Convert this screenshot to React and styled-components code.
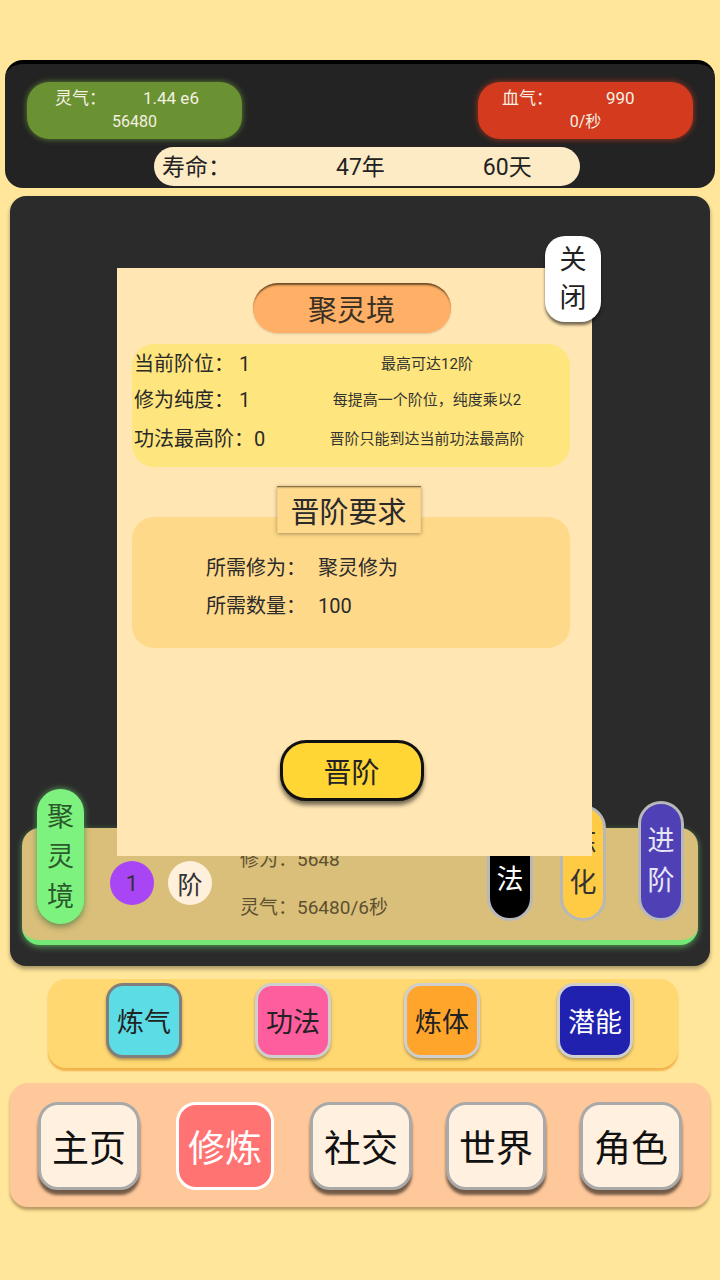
import React from "react";
import styled, { createGlobalStyle } from "styled-components";

const Global = createGlobalStyle`
  html, body { margin: 0; padding: 0; background: #FFE69B; }
  body { font-family: Roboto, "Noto Sans CJK SC", "Noto Sans", sans-serif; }
  * { box-sizing: border-box; }
`;

const Page = styled.div`
  width: 720px;
  min-height: 1280px;
  background: #FFE69B;
  padding-top: 60px;
  display: flex;
  flex-direction: column;
`;

const TopPanel = styled.div`
  margin: 0 5px;
  height: 128px;
  background: #232323;
  border-top: 4px solid #000;
  border-radius: 18px;
  padding: 18px 22px 0;
  display: flex;
  flex-direction: column;
`;

const StatRow = styled.div`
  display: flex;
  justify-content: space-between;
`;

const StatPill = styled.div`
  width: 215px;
  height: 57px;
  border-radius: 22px;
  background: ${(p) => p.$bg};
  box-shadow: 0 0 6px ${(p) => p.$glow};
  color: #F4F0E2;
  display: flex;
  flex-direction: column;
  padding-top: 3px;
`;

const StatTop = styled.div`
  display: flex;
  align-items: center;
  height: 26px;
  font-size: 17px;
`;

const StatLabel = styled.span`
  margin-left: ${(p) => p.$ml}px;
  width: ${(p) => p.$w}px;
  flex-shrink: 0;
  margin-top: -4px;
`;

const StatBottom = styled.div`
  text-align: center;
  font-size: 16px;
  line-height: 22px;
`;

const LifeBar = styled.div`
  margin-top: 8px;
  margin-left: 127px;
  width: 426px;
  height: 39px;
  border-radius: 20px;
  background: #FDEBC6;
  display: flex;
  align-items: center;
  padding: 0 0 4px 8px;
  font-size: 23px;
  color: #222;
`;

const LifeItem = styled.span`
  margin-left: ${(p) => p.$ml}px;
`;

const MainPanel = styled.div`
  position: relative;
  margin: 8px 10px 0;
  height: 770px;
  background: #2B2B2B;
  border-radius: 16px;
  box-shadow: 0 3px 4px rgba(0,0,0,0.35);
  display: flex;
  flex-direction: column;
  justify-content: flex-end;
  padding: 0 12px 21px;
`;

const RealmCard = styled.div`
  height: 117px;
  background: #D9BF7A;
  border-radius: 18px;
  border-bottom: 5px solid #74E874;
  box-shadow: 0 2px 6px rgba(116,232,116,0.55);
  display: flex;
  align-items: flex-end;
  padding: 0 14px 16px 15px;
`;

const VPill = styled.div`
  width: ${(p) => p.$w || 46}px;
  height: ${(p) => p.$h}px;
  border-radius: 24px;
  background: ${(p) => p.$bg};
  color: ${(p) => p.$fg};
  border: ${(p) => (p.$border ? "3px solid #B8B8B8" : "none")};
  box-shadow: ${(p) => p.$shadow || "none"};
  display: flex;
  flex-direction: column;
  align-items: center;
  justify-content: center;
  font-size: 27px;
  line-height: 40px;
  flex-shrink: 0;
  margin-left: ${(p) => p.$ml || 0}px;
  margin-bottom: ${(p) => p.$mb || 0}px;
`;

const Circle = styled.div`
  width: 44px;
  height: 44px;
  border-radius: 50%;
  background: ${(p) => p.$bg};
  color: #333;
  font-size: ${(p) => p.$fs}px;
  display: flex;
  align-items: center;
  justify-content: center;
  margin-left: ${(p) => p.$ml}px;
  margin-bottom: 19px;
  flex-shrink: 0;
`;

const RealmInfo = styled.div`
  margin-left: 28px;
  margin-bottom: -8px;
  color: #5E5030;
  font-size: 19px;
  line-height: 48px;
  flex: 1;
`;

const Modal = styled.div`
  position: absolute;
  left: 107px;
  top: 72px;
  width: 475px;
  height: 588px;
  background: #FFE6B2;
  display: flex;
  flex-direction: column;
  align-items: center;
  padding-top: 15px;
`;

const CloseBtn = styled.div`
  position: absolute;
  left: 428px;
  top: -32px;
  width: 56px;
  height: 86px;
  border-radius: 20px;
  background: #fff;
  box-shadow: 0 3px 3px rgba(0,0,0,0.55);
  display: flex;
  flex-direction: column;
  align-items: center;
  justify-content: center;
  font-size: 27px;
  line-height: 38px;
  color: #222;
`;

const TitlePill = styled.div`
  width: 198px;
  height: 50px;
  margin-left: -6px;
  border-radius: 25px;
  background: #FFB066;
  box-shadow: inset 0 3px 2px -1px rgba(60,40,20,0.75), 0 1px 2px rgba(0,0,0,0.15);
  display: flex;
  align-items: center;
  justify-content: center;
  font-size: 29px;
  color: #3A3024;
`;

const InfoBox = styled.div`
  margin-top: 11px;
  margin-left: -7px;
  width: 438px;
  height: 123px;
  border-radius: 22px;
  background: #FFE57D;
  display: grid;
  grid-template-columns: 150px 1fr;
  grid-template-rows: 36px 37px 40px;
  align-items: center;
  padding: 0 0 0 2px;
  color: #2A2A2A;
`;

const InfoLeft = styled.div`
  font-size: 20px;
  white-space: nowrap;
`;

const InfoRight = styled.div`
  font-size: 15px;
  text-align: center;
  white-space: nowrap;
  color: #333;
`;

const ReqLabel = styled.div`
  position: relative;
  z-index: 1;
  margin-top: 19px;
  margin-left: -12px;
  width: 144px;
  height: 47px;
  background: #FFDA8C;
  box-shadow: inset 0 2px 2px -1px rgba(60,40,20,0.8), 0 1px 4px rgba(0,0,0,0.35);
  display: flex;
  align-items: center;
  justify-content: center;
  font-size: 29px;
  color: #2A2A2A;
`;

const ReqBox = styled.div`
  margin-top: -16px;
  margin-left: -7px;
  width: 438px;
  height: 131px;
  border-radius: 22px;
  background: #FFD98A;
  display: grid;
  grid-template-columns: 112px 1fr;
  align-content: start;
  padding: 32px 0 0 74px;
  font-size: 20px;
  line-height: 38px;
  color: #2A2A2A;
`;

const AdvanceBtn = styled.button`
  margin-top: 92px;
  margin-left: -6px;
  width: 144px;
  height: 61px;
  border-radius: 26px;
  background: #FFD634;
  border: 3px solid #111;
  box-shadow: 0 4px 4px rgba(0,0,0,0.55);
  font-family: inherit;
  font-size: 28px;
  color: #222;
  display: flex;
  align-items: center;
  justify-content: center;
  padding: 0;
`;

const TabBar = styled.div`
  margin: 13px 42px 0 48px;
  height: 89px;
  background: #FFD872;
  border-radius: 18px;
  box-shadow: 0 3px 2px #F3B24A;
  display: flex;
  align-items: flex-start;
  padding: 4px 0 0 58px;
`;

const TabBtn = styled.div`
  width: 76px;
  height: 75px;
  border-radius: 17px;
  background: ${(p) => p.$bg};
  color: ${(p) => p.$fg};
  border: 3px solid ${(p) => p.$bd};
  box-shadow: 0 2px 3px rgba(0,0,0,0.3);
  display: flex;
  align-items: center;
  justify-content: center;
  font-size: 27px;
  margin-left: ${(p) => p.$ml || 0}px;
  flex-shrink: 0;
`;

const NavBar = styled.div`
  margin: 15px 10px 0;
  height: 124px;
  background: #FFC89B;
  border-radius: 18px;
  box-shadow: 0 3px 3px rgba(120,80,40,0.5);
  display: flex;
  align-items: flex-start;
  padding: 19px 0 0 28px;
`;

const NavBtn = styled.div`
  width: ${(p) => p.$w}px;
  height: 88px;
  border-radius: 20px;
  background: ${(p) => (p.$active ? "#FF7373" : "#FFF0E0")};
  color: ${(p) => (p.$active ? "#fff" : "#111")};
  border: 3px solid ${(p) => (p.$active ? "#fff" : "#A9A9A9")};
  box-shadow: ${(p) => (p.$active ? "none" : "0 5px 3px rgba(0,0,0,0.55)")};
  display: flex;
  align-items: center;
  justify-content: center;
  font-size: 37px;
  margin-left: ${(p) => p.$ml || 0}px;
  flex-shrink: 0;
`;

export default function App() {
  return (
    <>
      <Global />
      <Page>
        <TopPanel>
          <StatRow>
            <StatPill $bg="#6A9232" $glow="rgba(120,170,60,0.7)">
              <StatTop>
                <StatLabel $ml={28} $w={88}>灵气：</StatLabel>
                <span>1.44 e6</span>
              </StatTop>
              <StatBottom>56480</StatBottom>
            </StatPill>
            <StatPill $bg="#D33A1E" $glow="rgba(210,60,30,0.8)">
              <StatTop>
                <StatLabel $ml={24} $w={104}>血气：</StatLabel>
                <span>990</span>
              </StatTop>
              <StatBottom>0/秒</StatBottom>
            </StatPill>
          </StatRow>
          <LifeBar>
            <LifeItem $ml={0}>寿命：</LifeItem>
            <LifeItem $ml={105}>47年</LifeItem>
            <LifeItem $ml={98}>60天</LifeItem>
          </LifeBar>
        </TopPanel>

        <MainPanel>
          <RealmCard>
            <VPill
              $w={47}
              $h={135}
              $bg="#7EF27E"
              $fg="#2C5A2C"
              $shadow="0 3px 6px rgba(0,0,0,0.35), 0 0 6px rgba(126,242,126,0.7)"
            >
              <span>聚</span>
              <span>灵</span>
              <span>境</span>
            </VPill>
            <Circle $bg="#A845F5" $fs={22} $ml={26}>1</Circle>
            <Circle $bg="#FFF0DC" $fs={25} $ml={14}>阶</Circle>
            <RealmInfo>
              <div>修为：5648</div>
              <div>灵气：56480/6秒</div>
            </RealmInfo>
            <VPill $h={122} $bg="#000" $fg="#fff" $border $mb={3}>
              <span>功</span>
              <span>法</span>
            </VPill>
            <VPill $h={116} $bg="#FFCB45" $fg="#333" $border $ml={27} $mb={3}>
              <span>炼</span>
              <span>化</span>
            </VPill>
            <VPill $h={120} $bg="#5040B6" $fg="#E6E6F4" $border $ml={32} $mb={3}>
              <span>进</span>
              <span>阶</span>
            </VPill>
          </RealmCard>

          <Modal>
            <CloseBtn>
              <span>关</span>
              <span>闭</span>
            </CloseBtn>
            <TitlePill>聚灵境</TitlePill>
            <InfoBox>
              <InfoLeft>当前阶位：&nbsp;1</InfoLeft>
              <InfoRight>最高可达12阶</InfoRight>
              <InfoLeft>修为纯度：&nbsp;1</InfoLeft>
              <InfoRight>每提高一个阶位，纯度乘以2</InfoRight>
              <InfoLeft>功法最高阶：0</InfoLeft>
              <InfoRight>晋阶只能到达当前功法最高阶</InfoRight>
            </InfoBox>
            <ReqLabel>晋阶要求</ReqLabel>
            <ReqBox>
              <span>所需修为：</span>
              <span>聚灵修为</span>
              <span>所需数量：</span>
              <span>100</span>
            </ReqBox>
            <AdvanceBtn>晋阶</AdvanceBtn>
          </Modal>
        </MainPanel>

        <TabBar>
          <TabBtn $bg="#5CDDE6" $fg="#222" $bd="#7F7F7F">炼气</TabBtn>
          <TabBtn $bg="#FF5E9E" $fg="#222" $bd="#CFCFCF" $ml={73}>功法</TabBtn>
          <TabBtn $bg="#FFA52C" $fg="#222" $bd="#CFCFCF" $ml={73}>炼体</TabBtn>
          <TabBtn $bg="#2121B0" $fg="#fff" $bd="#CFCFCF" $ml={77}>潜能</TabBtn>
        </TabBar>

        <NavBar>
          <NavBtn $w={102}>主页</NavBtn>
          <NavBtn $w={98} $ml={36} $active>修炼</NavBtn>
          <NavBtn $w={102} $ml={36}>社交</NavBtn>
          <NavBtn $w={100} $ml={34}>世界</NavBtn>
          <NavBtn $w={102} $ml={34}>角色</NavBtn>
        </NavBar>
      </Page>
    </>
  );
}
